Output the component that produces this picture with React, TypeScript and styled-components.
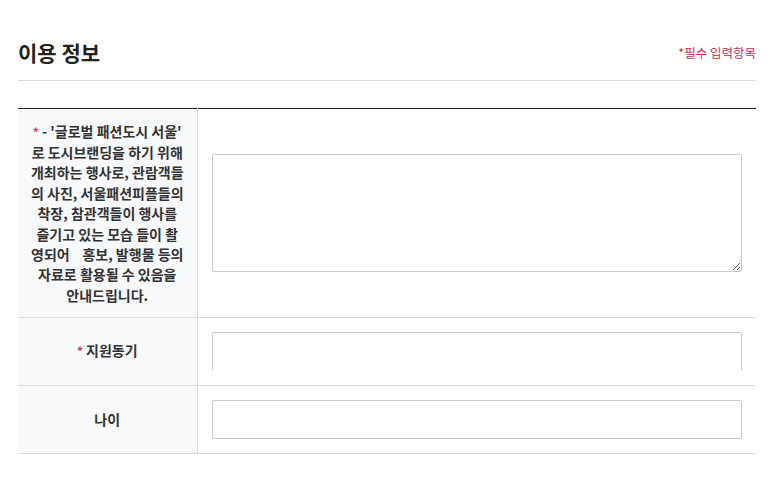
import React from "react";
import styled, { createGlobalStyle } from "styled-components";

const GlobalStyle = createGlobalStyle`
	html, body {
		margin: 0;
		padding: 0;
		background: #fff;
	}
	body {
		font-family: "Noto Sans CJK KR", "Noto Sans", sans-serif;
		color: #222;
	}
`;

const Wrapper = styled.div`
	padding: 0 23px 0 18px;
`;

const Header = styled.div`
	display: flex;
	align-items: center;
	justify-content: space-between;
	height: 81px;
	border-bottom: 1px solid #dddddd;
	box-sizing: border-box;
	padding-top: 24px;
`;

const Title = styled.h2`
	margin: 0;
	font-size: 21px;
	font-weight: 700;
	color: #222;
`;

const Required = styled.span`
	font-size: 12.5px;
	color: #c9305a;
	padding-top: 1px;
`;

const Table = styled.table`
	width: 100%;
	margin-top: 27px;
	border-collapse: collapse;
	border-top: 1px solid #222;
	table-layout: fixed;
`;

const Row = styled.tr`
	border-bottom: 1px solid #dddddd;
`;

const HeadCol = styled.col`
	width: 179px;
`;

const HeadCell = styled.th`
	background: #f8f9fb;
	border-right: 1px solid #dddddd;
	padding: 11.5px 2px;
	font-size: 14px;
	font-weight: 700;
	line-height: 20.4px;
	color: #333;
	text-align: center;
	vertical-align: middle;
	white-space: nowrap;
	overflow: hidden;
`;

const Star = styled.span`
	color: #d6375a;
	margin-right: 3px;
	font-size: 12px;
`;

const BodyCell = styled.td`
	padding: 14px 14px;
	vertical-align: middle;
`;

const TextArea = styled.textarea`
	display: block;
	width: 100%;
	height: 118px;
	box-sizing: border-box;
	border: 1px solid #cccccc;
	border-radius: 2px;
	margin: 0;
	font-family: inherit;
`;

const Input = styled.input<{ $open?: boolean }>`
	display: block;
	width: 100%;
	height: 39px;
	box-sizing: border-box;
	border: 1px solid #cccccc;
	border-bottom-color: ${(p) => (p.$open ? "transparent" : "#cccccc")};
	border-radius: 2px;
	margin: 0;
	font-family: inherit;
`;

const noticeLines = [
	"로 도시브랜딩을 하기 위해",
	"개최하는 행사로, 관람객들",
	"의 사진, 서울패션피플들의",
	"착장, 참관객들이 행사를",
	"즐기고 있는 모습 들이 촬",
	"영되어\u00a0\u00a0\u00a0 홍보, 발행물 등의",
	"자료로 활용될 수 있음을",
	"안내드립니다."
];

export default function App() {
	return (
		<>
			<GlobalStyle />
			<Wrapper>
				<Header>
					<Title>이용 정보</Title>
					<Required>*필수 입력항목</Required>
				</Header>
				<Table>
					<colgroup>
						<HeadCol />
						<col />
					</colgroup>
					<tbody>
						<Row>
							<HeadCell>
								<Star>*</Star>- '글로벌 패션도시 서울'
								{noticeLines.map((line) => (
									<React.Fragment key={line}>
										<br />
										{line}
									</React.Fragment>
								))}
							</HeadCell>
							<BodyCell>
								<TextArea />
							</BodyCell>
						</Row>
						<Row>
							<HeadCell>
								<Star>*</Star>지원동기
							</HeadCell>
							<BodyCell>
								<Input $open />
							</BodyCell>
						</Row>
						<Row>
							<HeadCell>나이</HeadCell>
							<BodyCell>
								<Input />
							</BodyCell>
						</Row>
					</tbody>
				</Table>
			</Wrapper>
		</>
	);
}
